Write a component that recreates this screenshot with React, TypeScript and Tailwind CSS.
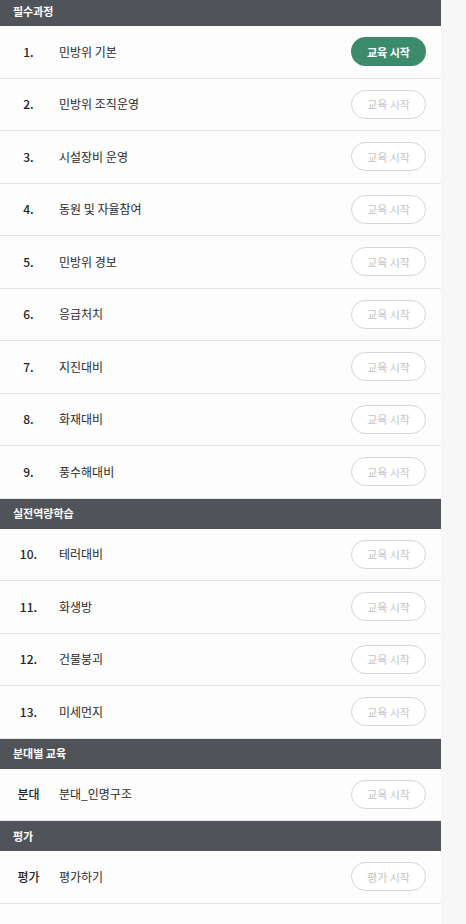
import React from "react";

type Course = { no: string; title: string; label?: string; active?: boolean };

const sections: { name: string; items: Course[] }[] = [
  {
    name: "필수과정",
    items: [
      { no: "1.", title: "민방위 기본", active: true },
      { no: "2.", title: "민방위 조직운영" },
      { no: "3.", title: "시설장비 운영" },
      { no: "4.", title: "동원 및 자율참여" },
      { no: "5.", title: "민방위 경보" },
      { no: "6.", title: "응급처치" },
      { no: "7.", title: "지진대비" },
      { no: "8.", title: "화재대비" },
      { no: "9.", title: "풍수해대비" },
    ],
  },
  {
    name: "실전역량학습",
    items: [
      { no: "10.", title: "테러대비" },
      { no: "11.", title: "화생방" },
      { no: "12.", title: "건물붕괴" },
      { no: "13.", title: "미세먼지" },
    ],
  },
  {
    name: "분대별 교육",
    items: [{ no: "분대", title: "분대_인명구조" }],
  },
  {
    name: "평가",
    items: [{ no: "평가", title: "평가하기", label: "평가 시작" }],
  },
];

const Row: React.FC<{ item: Course }> = ({ item }) => (
  <div className="flex items-center h-[52.5px] border-b border-[#e6e6e6]">
    <span className="w-[57px] text-center text-[12px] font-medium text-[#222]">{item.no}</span>
    <span className="flex-1 pl-[2px] text-[12px] text-[#2a2a2a]">{item.title}</span>
    <button
      className={
        item.active
          ? "mr-[15px] w-[75px] h-[29px] rounded-full bg-[#3b8b6c] text-white text-[11px] font-bold"
          : "mr-[15px] w-[75px] h-[29px] rounded-full bg-white border border-[#d6d6d6] text-[#c4c4c4] text-[11px]"
      }
    >
      {item.label ?? "교육 시작"}
    </button>
  </div>
);

export default function App() {
  return (
    <div
      className="h-[924px] bg-[#f7f7f8] overflow-hidden"
      style={{ fontFamily: '"Noto Sans CJK KR", "Noto Sans", sans-serif' }}
    >
      <div className="w-[441px] h-[928px] -mt-[4px] bg-[#fdfdfd]">
        {sections.map((s) => (
          <div key={s.name}>
            <div className="h-[30px] flex items-center pl-[13px] bg-[#505459] text-white text-[11px] font-bold">
              {s.name}
            </div>
            {s.items.map((it) => (
              <Row key={it.no} item={it} />
            ))}
          </div>
        ))}
      </div>
    </div>
  );
}
